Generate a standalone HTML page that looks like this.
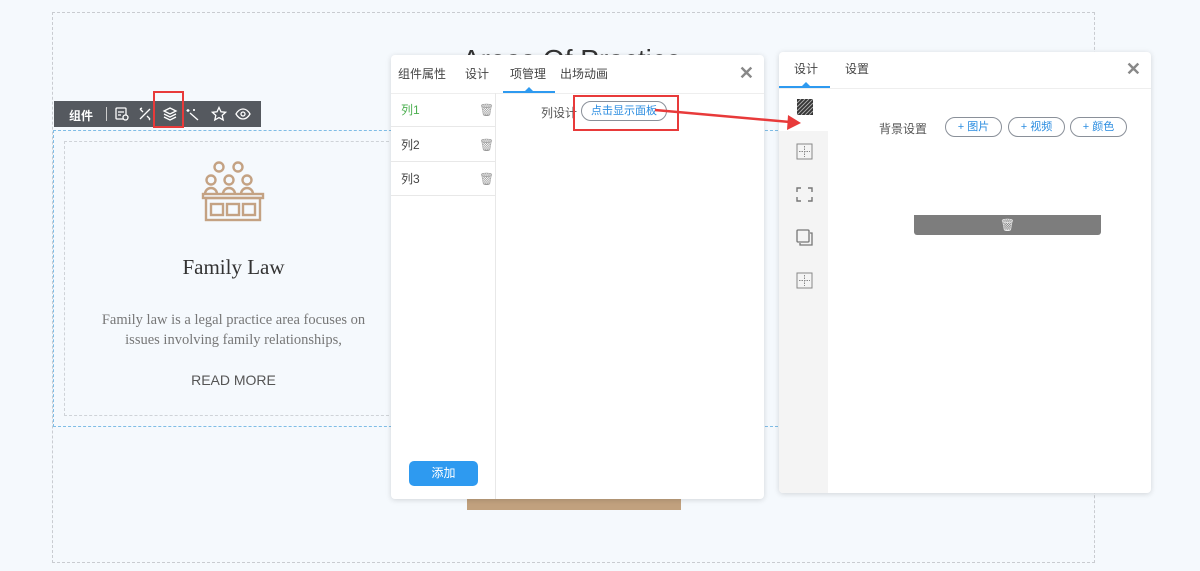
<!DOCTYPE html>
<html><head><meta charset="utf-8"><style>
*{box-sizing:border-box;margin:0;padding:0}
body{width:1200px;height:571px;background:#f5f9fd;font-family:"Liberation Sans","Noto Sans CJK SC",sans-serif;position:relative;overflow:hidden;font-size:12px;color:#555}
.abs{position:absolute}
.outer{left:52px;top:12px;width:1043px;height:551px;border:1px dashed #c9ccd1}
.secline{height:0;border-top:1px dashed #7fbde6}
.title{left:462px;top:44px;font-size:28px;color:#333;white-space:nowrap}
.toolbar{left:54px;top:101px;width:207px;height:26px;background:#55595f;color:#fff;font-weight:bold;font-size:12px}
.card{left:64px;top:141px;width:330px;height:275px;border:1px dashed #cfd3d8}
.serif{font-family:"Liberation Serif","Noto Serif CJK SC",serif}
.panel{background:#fff;border-radius:4px;box-shadow:0 1px 6px rgba(0,0,0,.15)}
.tab{position:absolute;top:0;font-size:12px;color:#444;line-height:38px}
.x{position:absolute;font-size:18px;color:#888;font-weight:bold}
.row{position:absolute;left:0;width:104px;height:34px;border-bottom:1px solid #e8e8e8;line-height:34px;padding-left:10px;font-size:12px;color:#444}
.pill{position:absolute;height:20px;border:1px solid #8a9099;border-radius:10px;color:#2a8ce0;font-size:11px;line-height:18px;text-align:center}
</style></head><body>
<div class="abs outer"></div>
<div class="abs title">Areas Of Practice</div>
<div class="abs secline" style="left:53px;top:130px;width:730px"></div>
<div class="abs secline" style="left:53px;top:426px;width:730px"></div>
<div class="abs" style="left:53px;top:130px;height:297px;border-left:1px dashed #7fbde6"></div>

<div class="abs toolbar">
 <span class="abs" style="left:15px;top:6px">组件</span>
 <span class="abs" style="left:52px;top:6px;width:1px;height:14px;background:#ccc"></span>
 <svg class="abs" style="left:60px;top:5px" width="16" height="16" fill="none" stroke="#fff" stroke-width="1.3"><rect x="2" y="2" width="10" height="11" rx="1"/><path d="M4 6h6M4 9h3"/><circle cx="11.5" cy="11.5" r="2.5" fill="#55595f"/></svg>
 <svg class="abs" style="left:83px;top:5px" width="16" height="16" fill="none" stroke="#fff" stroke-width="1.3"><path d="M3 13L13 3M3 3l3 3M10 10l3 3M3 3l2-1M13 13l-1 1"/></svg>
 <svg class="abs" style="left:108px;top:5px" width="16" height="16" fill="none" stroke="#fff" stroke-width="1.3"><path d="M8 2l6 3-6 3-6-3z"/><path d="M2 8l6 3 6-3M2 11l6 3 6-3"/></svg>
 <svg class="abs" style="left:131px;top:5px" width="16" height="16" fill="none" stroke="#fff" stroke-width="1.3"><path d="M5 7l8 7M3 3v3M1.5 4.5h3M9 3v2M8 4h2"/></svg>
 <svg class="abs" style="left:157px;top:5px" width="16" height="16" fill="none" stroke="#fff" stroke-width="1.3"><path d="M8 1.5l2 4.3 4.6.5-3.4 3.1 1 4.6L8 11.6 3.8 14l1-4.6L1.4 6.3 6 5.8z"/></svg>
 <svg class="abs" style="left:181px;top:5px" width="16" height="16" fill="none" stroke="#fff" stroke-width="1.3"><path d="M1 8c2-3.5 4.5-5 7-5s5 1.5 7 5c-2 3.5-4.5 5-7 5s-5-1.5-7-5z"/><circle cx="8" cy="8" r="2"/></svg>
</div>
<div class="abs" style="left:153px;top:91px;width:31px;height:37px;border:2px solid #e83a3a"></div>

<div class="abs card">
 <svg class="abs" style="left:136px;top:17px" width="66" height="66" fill="none" stroke="#c4a283" stroke-width="2.4"><circle cx="18" cy="8" r="4.5"/><circle cx="37" cy="8" r="4.5"/><circle cx="10" cy="21" r="4.5"/><circle cx="28" cy="21" r="4.5"/><circle cx="46" cy="21" r="4.5"/><path d="M4 35a6 6 0 0 1 12 0M22 35a6 6 0 0 1 12 0M40 35a6 6 0 0 1 12 0"/><rect x="2" y="35" width="60" height="4"/><rect x="5" y="39" width="54" height="22"/><rect x="10" y="45" width="12" height="11"/><rect x="26" y="45" width="12" height="11"/><rect x="42" y="45" width="12" height="11"/></svg>
 <div class="abs serif" style="left:0;width:337px;top:113px;text-align:center;font-size:21px;color:#333">Family Law</div>
 <div class="abs serif" style="left:0;width:337px;top:168px;text-align:center;font-size:14.5px;line-height:20px;color:#777">Family law is a legal practice area focuses on<br>issues involving family relationships,</div>
 <div class="abs" style="left:0;width:337px;top:230px;text-align:center;font-size:14px;color:#555">READ MORE</div>
</div>

<div class="abs" style="left:467px;top:490px;width:214px;height:20px;background:#c1a17e"></div>

<div class="abs panel" style="left:391px;top:55px;width:373px;height:444px">
 <span class="tab" style="left:7px">组件属性</span>
 <span class="tab" style="left:74px">设计</span>
 <span class="tab" style="left:119px">项管理</span>
 <span class="tab" style="left:169px">出场动画</span>
 <div class="abs" style="left:112px;top:36px;width:52px;height:2px;background:#2e9af0"></div>
 <div class="abs" style="left:134px;top:32px;border:4px solid transparent;border-bottom-color:#2e9af0;border-top:0"></div>
 <span class="x" style="right:10px;top:8px">✕</span>
 <div class="abs" style="left:0;top:38px;width:373px;height:1px;background:#eee"></div>
 <div class="abs" style="left:104px;top:38px;width:1px;height:406px;background:#e8e8e8"></div>
 <div class="row" style="top:38px;color:#4caf50">列1<span class="abs" style="left:88px;color:#999">🗑</span></div>
 <div class="row" style="top:73px">列2<span class="abs" style="left:88px;color:#999">🗑</span></div>
 <div class="row" style="top:107px">列3<span class="abs" style="left:88px;color:#999">🗑</span></div>
 <div class="abs" style="left:18px;top:406px;width:69px;height:25px;background:#2e9af0;border-radius:5px;color:#fff;text-align:center;line-height:25px;font-size:12px">添加</div>
 <span class="abs" style="left:150px;top:49px;color:#555">列设计</span>
 <div class="pill" style="left:190px;top:46px;width:86px">点击显示面板</div>
</div>
<div class="abs" style="left:573px;top:95px;width:106px;height:36px;border:2px solid #e83a3a"></div>

<div class="abs panel" style="left:779px;top:52px;width:372px;height:441px;overflow:hidden">
 <span class="tab" style="left:15px;line-height:35px">设计</span>
 <span class="tab" style="left:66px;line-height:35px">设置</span>
 <div class="abs" style="left:0;top:34px;width:51px;height:2px;background:#2e9af0"></div>
 <div class="abs" style="left:23px;top:30px;border:4px solid transparent;border-bottom-color:#2e9af0;border-top:0"></div>
 <span class="x" style="right:10px;top:7px">✕</span>
 <div class="abs" style="left:0;top:36px;width:372px;height:1px;background:#eee"></div>
 <div class="abs" style="left:0;top:79px;width:49px;height:362px;background:#f4f4f4"></div>
 <svg class="abs" style="left:18px;top:47px" width="16" height="16"><rect x="0" y="0" width="16" height="16" fill="#333"/><path d="M0 4L4 0M0 8L8 0M0 12L12 0M0 16L16 0M4 16L16 4M8 16L16 8M12 16L16 12" stroke="#aaa" stroke-width="1"/></svg>
 <svg class="abs" style="left:17px;top:91px" width="17" height="17" fill="none" stroke="#888"><rect x="1" y="1" width="15" height="15"/><path d="M8.5 3v11M3 8.5h11" stroke-dasharray="1.5 1"/></svg>
 <svg class="abs" style="left:17px;top:134px" width="17" height="17" fill="none" stroke="#777" stroke-width="1.4"><path d="M1 6V2h4M12 2h4v4M16 11v4h-4M5 15H1v-4"/></svg>
 <svg class="abs" style="left:17px;top:177px" width="17" height="17" fill="none" stroke="#777" stroke-width="1.3"><rect x="1" y="1" width="12" height="12" rx="1"/><path d="M14 4h2v12H4v-2"/></svg>
 <svg class="abs" style="left:17px;top:220px" width="17" height="17" fill="none" stroke="#888"><rect x="1" y="1" width="15" height="15"/><path d="M8.5 3v11M3 8.5h11" stroke-dasharray="1.5 1"/></svg>
 <span class="abs" style="left:100px;top:68px;color:#555">背景设置</span>
 <div class="pill" style="left:166px;top:65px;width:57px">+ 图片</div>
 <div class="pill" style="left:229px;top:65px;width:57px">+ 视频</div>
 <div class="pill" style="left:291px;top:65px;width:57px">+ 颜色</div>
 <div class="abs" style="left:135px;top:163px;width:187px;height:20px;background:#7d7d7d;border-radius:0 0 3px 3px;color:#eee;text-align:center;line-height:20px;font-size:12px">🗑</div>
</div>

<svg class="abs" style="left:650px;top:100px" width="160" height="35"><path d="M5 10L140 22" stroke="#e83a3a" stroke-width="2.5"/><path d="M138 15L151 23L137 30Z" fill="#e83a3a"/></svg>
</body></html>
